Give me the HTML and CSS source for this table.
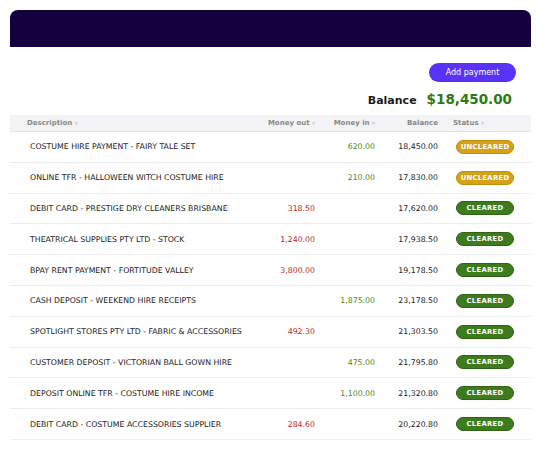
FILE: index.html
```html
<!DOCTYPE html>
<html lang="en">
<head>
    <meta charset="UTF-8">
    <meta name="viewport" content="width=device-width, initial-scale=1.0">
    <title>Transactions</title>
    <link rel="stylesheet" href="styles.css">
</head>
<body>

    <div class="banner"></div>

    <div class="toolbar">
        <button class="add-btn">Add payment</button>
    </div>

    <div class="balance">
        <span class="balance-label">Balance</span>
        <span class="balance-amount">$18,450.00</span>
    </div>

    <table class="tx-table">
        <colgroup>
            <col class="col-desc">
            <col class="col-out">
            <col class="col-in">
            <col class="col-bal">
            <col class="col-status">
        </colgroup>
        <thead>
            <tr>
                <th class="desc">Description <span class="sort">&#9663;</span></th>
                <th class="num">Money out <span class="sort">&#9663;</span></th>
                <th class="num">Money in <span class="sort">&#9663;</span></th>
                <th class="num">Balance</th>
                <th class="status">Status <span class="sort">&#9663;</span></th>
            </tr>
        </thead>
        <tbody>
            <tr>
                <td class="desc">COSTUME HIRE PAYMENT - FAIRY TALE SET</td>
                <td class="num out"></td>
                <td class="num in">620.00</td>
                <td class="num">18,450.00</td>
                <td class="status"><span class="badge uncleared">UNCLEARED</span></td>
            </tr>
            <tr>
                <td class="desc">ONLINE TFR - HALLOWEEN WITCH COSTUME HIRE</td>
                <td class="num out"></td>
                <td class="num in">210.00</td>
                <td class="num">17,830.00</td>
                <td class="status"><span class="badge uncleared">UNCLEARED</span></td>
            </tr>
            <tr>
                <td class="desc">DEBIT CARD - PRESTIGE DRY CLEANERS BRISBANE</td>
                <td class="num out">318.50</td>
                <td class="num in"></td>
                <td class="num">17,620.00</td>
                <td class="status"><span class="badge cleared">CLEARED</span></td>
            </tr>
            <tr>
                <td class="desc">THEATRICAL SUPPLIES PTY LTD - STOCK</td>
                <td class="num out">1,240.00</td>
                <td class="num in"></td>
                <td class="num">17,938.50</td>
                <td class="status"><span class="badge cleared">CLEARED</span></td>
            </tr>
            <tr>
                <td class="desc">BPAY RENT PAYMENT - FORTITUDE VALLEY</td>
                <td class="num out">3,800.00</td>
                <td class="num in"></td>
                <td class="num">19,178.50</td>
                <td class="status"><span class="badge cleared">CLEARED</span></td>
            </tr>
            <tr>
                <td class="desc">CASH DEPOSIT - WEEKEND HIRE RECEIPTS</td>
                <td class="num out"></td>
                <td class="num in">1,875.00</td>
                <td class="num">23,178.50</td>
                <td class="status"><span class="badge cleared">CLEARED</span></td>
            </tr>
            <tr>
                <td class="desc">SPOTLIGHT STORES PTY LTD - FABRIC &amp; ACCESSORIES</td>
                <td class="num out">492.30</td>
                <td class="num in"></td>
                <td class="num">21,303.50</td>
                <td class="status"><span class="badge cleared">CLEARED</span></td>
            </tr>
            <tr>
                <td class="desc">CUSTOMER DEPOSIT - VICTORIAN BALL GOWN HIRE</td>
                <td class="num out"></td>
                <td class="num in">475.00</td>
                <td class="num">21,795.80</td>
                <td class="status"><span class="badge cleared">CLEARED</span></td>
            </tr>
            <tr>
                <td class="desc">DEPOSIT ONLINE TFR - COSTUME HIRE INCOME</td>
                <td class="num out"></td>
                <td class="num in">1,100.00</td>
                <td class="num">21,320.80</td>
                <td class="status"><span class="badge cleared">CLEARED</span></td>
            </tr>
            <tr class="last">
                <td class="desc">DEBIT CARD - COSTUME ACCESSORIES SUPPLIER</td>
                <td class="num out">284.60</td>
                <td class="num in"></td>
                <td class="num">20,220.80</td>
                <td class="status"><span class="badge cleared">CLEARED</span></td>
            </tr>
        </tbody>
    </table>

</body>
</html>
```

FILE: styles.css
```css
body {
    font-family: "DejaVu Sans", Verdana, sans-serif;
    margin: 10px;
    background: #ffffff;
    color: #222222;
}

.banner {
    height: 37px;
    background: #13003d;
    border-radius: 8px 8px 0 0;
}

.toolbar {
    display: flex;
    justify-content: flex-end;
    padding: 16px 15px 0 0;
}

.add-btn {
    font-family: inherit;
    font-size: 8px;
    color: #ffffff;
    background: #5a32f5;
    border: none;
    border-radius: 10px;
    width: 87px;
    height: 19px;
    padding: 0;
}

.balance {
    display: flex;
    justify-content: flex-end;
    align-items: baseline;
    gap: 10px;
    padding: 9px 19px 0 0;
    height: 28px;
    box-sizing: border-box;
}

.balance-label {
    font-size: 11px;
    font-weight: bold;
    color: #1a1a1a;
}

.balance-amount {
    font-size: 13.5px;
    font-weight: bold;
    color: #2e7a12;
}

.tx-table {
    width: 100%;
    border-collapse: collapse;
    table-layout: fixed;
    margin-top: 5px;
}

.col-desc { width: 248px; }
.col-out { width: 60px; }
.col-in { width: 60px; }
.col-bal { width: 63px; }
.col-status { width: 90px; }

.tx-table th {
    background: #f3f3f6;
    color: #888888;
    font-size: 7px;
    font-weight: bold;
    height: 16px;
    padding: 0 3px;
    text-align: left;
    border-bottom: 1px solid #e6e6ea;
}

.tx-table th.desc {
    padding-left: 17px;
}

.tx-table th.num {
    text-align: right;
}

.sort {
    font-size: 6px;
    color: #aaaaaa;
    font-weight: normal;
}

.tx-table tbody tr {
    height: 30.8px;
}

.tx-table td {
    font-size: 7.8px;
    padding: 0 3px;
    border-bottom: 1px solid #ededf0;
    color: #222222;
    white-space: nowrap;
}

.tx-table tr.last td {
    border-bottom-color: #f0f0f2;
}

.tx-table td.desc {
    padding-left: 20px;
}

.tx-table td.num {
    text-align: right;
}

.tx-table td.out {
    color: #c0281d;
}

.tx-table td.in {
    color: #4a8a24;
}

.tx-table .status {
    padding-left: 12px;
}

.tx-table td.status {
    padding-left: 15px;
}

.badge {
    display: inline-block;
    width: 58px;
    box-sizing: border-box;
    text-align: center;
    font-size: 6.8px;
    font-weight: bold;
    color: #ffffff;
    border-radius: 7px;
    padding: 2px 0;
    letter-spacing: 0.3px;
}

.uncleared {
    background: #d4a118;
    border: 1px solid #c08e10;
}

.cleared {
    background: #3e7a1e;
    border: 1px solid #2f6414;
}
```
